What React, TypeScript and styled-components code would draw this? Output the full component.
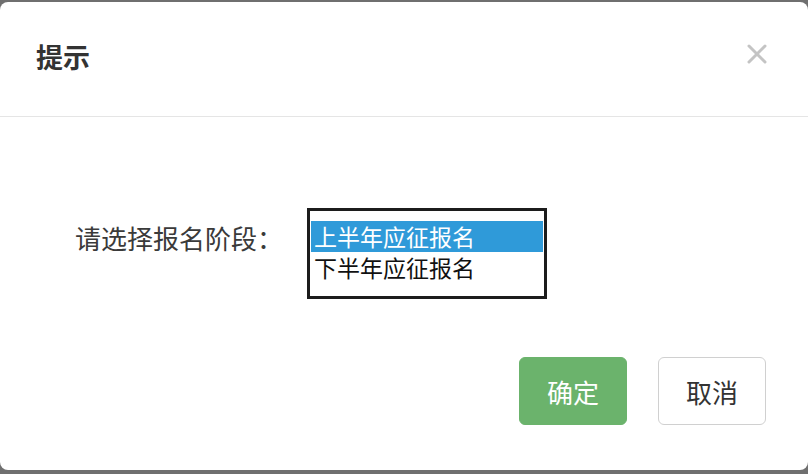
import { FC, useState } from "react";
import styled, { createGlobalStyle } from "styled-components";

const GlobalStyle = createGlobalStyle`
  html, body {
    margin: 0;
    padding: 0;
    background: #6f6f6f;
    font-family: "Noto Sans CJK SC", "Noto Sans", sans-serif;
  }
`;

const options = ["上半年应征报名", "下半年应征报名"];

const App: FC = () => {
  const [selected, setSelected] = useState(0);

  return (
    <>
      <GlobalStyle />
      <StyledModal>
        <StyledHeader>
          <StyledTitle>提示</StyledTitle>
          <StyledClose aria-label="close">
            <svg width="22" height="22" viewBox="0 0 22 22">
              <path
                d="M3 3 L19 19 M19 3 L3 19"
                stroke="#c4c4c4"
                strokeWidth="3"
                strokeLinecap="round"
              />
            </svg>
          </StyledClose>
        </StyledHeader>
        <StyledBody>
          <StyledLabel>请选择报名阶段：</StyledLabel>
          <StyledListBox role="listbox">
            {options.map((option, index) => (
              <StyledOption
                key={option}
                role="option"
                aria-selected={selected === index}
                $active={selected === index}
                onClick={() => setSelected(index)}
              >
                {option}
              </StyledOption>
            ))}
          </StyledListBox>
        </StyledBody>
        <StyledFooter>
          <StyledButton $primary>确定</StyledButton>
          <StyledButton>取消</StyledButton>
        </StyledFooter>
      </StyledModal>
    </>
  );
};

const StyledModal = styled.div`
  margin-top: 2px;
  height: 468px;
  background: #fff;
  border-radius: 8px;
  display: flex;
  flex-direction: column;
  box-sizing: border-box;
`;

const StyledHeader = styled.div`
  height: 115px;
  border-bottom: 1px solid #e5e5e5;
  display: flex;
  align-items: center;
  justify-content: space-between;
  padding: 0 40px 6px 36px;
  box-sizing: border-box;
`;

const StyledTitle = styled.h4`
  margin: 0;
  font-size: 27px;
  font-weight: bold;
  color: #333;
  line-height: 1;
`;

const StyledClose = styled.button`
  border: none;
  background: none;
  padding: 0;
  margin-top: -4px;
  display: flex;
  cursor: pointer;
`;

const StyledBody = styled.div`
  display: flex;
  align-items: flex-start;
  padding: 91px 0 0 75px;
`;

const StyledLabel = styled.label`
  width: 232px;
  margin-top: 14px;
  font-size: 26px;
  line-height: 32px;
  color: #3a3a3a;
`;

const StyledListBox = styled.div`
  width: 240px;
  height: 91px;
  box-sizing: border-box;
  border: 3px solid #1c1c1c;
  padding: 10px 1px 0;
  background: #fff;
`;

const StyledOption = styled.div<{ $active?: boolean }>`
  height: 31px;
  line-height: 31px;
  padding-left: 3px;
  font-size: 23px;
  white-space: nowrap;
  background: ${({ $active }) => ($active ? "#2f9ad9" : "transparent")};
  color: ${({ $active }) => ($active ? "#fff" : "#111")};
  cursor: default;
`;

const StyledFooter = styled.div`
  display: flex;
  justify-content: flex-end;
  gap: 31px;
  padding: 58px 42px 0 0;
`;

const StyledButton = styled.button<{ $primary?: boolean }>`
  width: 108px;
  height: 68px;
  border-radius: 6px;
  font-family: "Noto Sans CJK SC", sans-serif;
  font-size: 26px;
  cursor: pointer;
  border: 1px solid ${({ $primary }) => ($primary ? "#6bb36c" : "#d0d0d0")};
  background: ${({ $primary }) => ($primary ? "#6bb36c" : "#fff")};
  color: ${({ $primary }) => ($primary ? "#fff" : "#333")};
`;

export default App;
